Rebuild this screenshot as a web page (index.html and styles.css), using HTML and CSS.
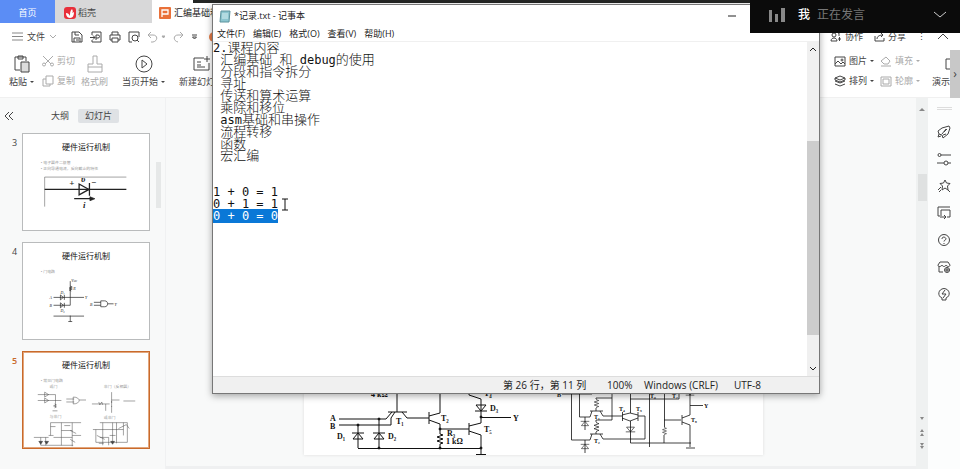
FILE: index.html
```html
<!DOCTYPE html>
<html lang="zh-CN">
<head>
    <meta charset="UTF-8">
    <meta name="viewport" content="width=device-width, initial-scale=1.0">
    <title>汇编基础</title>
    <link rel="stylesheet" href="styles.css">
</head>
<body>
    <svg width="0" height="0" class="defs">
        <symbol id="res" viewBox="0 0 6 12" overflow="visible"><path d="M3 0v1l3 1-6 2 6 2-6 2 6 2-3 1v1"/></symbol>
        <symbol id="diode-up" viewBox="0 0 14 8" overflow="visible"><path d="M1 1h12M2 7l5-6 5 6z"/></symbol>
        <symbol id="diode-down" viewBox="0 0 14 8" overflow="visible"><path d="M1 7h12M2 1l5 6 5-6z"/></symbol>
    </svg>

    <div class="app">
        <nav class="tabs">
            <button class="tab home">首页</button>
            <button class="tab docer">
                <svg width="12" height="12" viewBox="0 0 12 12" stroke-width="0"><rect width="12" height="12" rx="3" fill="#e8303a"/><path d="M6 11C3 11 2 8 2 6c2 0 3 1 4 3 0-3 0-5 2-7 1 2 1 3 0 4l2-1c0 3-1 6-4 6z" fill="#fff"/></svg>
                稻壳
            </button>
            <button class="tab active">
                <svg width="12" height="12" viewBox="0 0 12 12"><rect width="12" height="12" rx="1" fill="#e9713a" stroke="none"/><path d="M3 10V3h6v4H3" fill="none" stroke="#fff" stroke-width="1.3"/></svg>
                汇编基础和debug
            </button>
        </nav>

        <div class="quickbar">
            <button class="file-menu">
                <svg width="11" height="9" viewBox="0 0 11 9" class="soft"><path d="M0 1h11M0 4.500h11M0 8h11"/></svg>
                文件
                <svg class="muted" width="8" height="5" viewBox="0 0 8 5"><path d="M1 1l3 3 3-3"/></svg>
            </button>
            <button aria-label="保存"><svg width="12" height="12" viewBox="0 0 12 12"><path d="M1 11V1h7l3 3v7zM3 11V7h6v4M4 1v3h4M5 9h3"/></svg></button>
            <button aria-label="输出"><svg width="12" height="12" viewBox="0 0 12 12"><path d="M2 4V1h9v10H2V9M0 6.500h5M3 4.500l2 2-2 2M6 9V4h2a1 1 0 010 3H6"/></svg></button>
            <button aria-label="打印"><svg width="12" height="12" viewBox="0 0 12 12"><path d="M3 4V1h6v3M3 9H1V4h10v5H9M3 7h6v4H3z"/></svg></button>
            <button aria-label="预览"><svg width="12" height="12" viewBox="0 0 12 12"><path d="M4 11H1V1h10v5M11 11L9 9"/><circle cx="7" cy="7" r="3"/></svg></button>
            <button aria-label="撤销" class="muted"><svg width="18" height="12" viewBox="0 0 18 12"><path d="M4 1L1 4l3 3M1 4h5c5 0 5 6 0 7H4"/><path d="M15 5h3l-1.500 2z" class="solid"/></svg></button>
            <button aria-label="重做" class="muted"><svg width="12" height="12" viewBox="0 0 12 12"><path d="M8 1l3 3-3 3M11 4H6C1 4 1 10 6 11"/></svg></button>
            <button aria-label="更多"><svg width="7" height="6" viewBox="0 0 7 6"><path d="M1 1h5M1.500 3l2 2 2-2z"/></svg></button>
            <span class="badge"></span>
            <div class="quick-right">
                <button><svg width="12" height="10" viewBox="0 0 12 10"><circle cx="4" cy="3" r="2"/><path d="M1 9c0-4 6-4 6 0zM8 1h1v3M8 7h3M9.500 5v4"/></svg>协作</button>
                <button><svg width="11" height="10" viewBox="0 0 11 10"><path d="M1 4v5h9V6M3 7c0-3 3-4 6-4M7 1l2 2-2 2"/></svg>分享</button>
                <button aria-label="菜单">⋮</button>
                <button aria-label="收起"><svg width="12" height="7" viewBox="0 0 12 7"><path d="M1 6l5-5 5 5"/></svg></button>
            </div>
        </div>

        <div class="ribbon">
            <button class="big paste">
                <svg width="18" height="18" viewBox="0 0 18 18"><path d="M7 15H2V2h11v4M5 1h5v3H5z"/><path d="M8 7h8v10H8z" fill="#ddd"/></svg>
                <span>粘贴<i class="caret"></i></span>
            </button>
            <div class="stack muted">
                <button><svg width="12" height="12" viewBox="0 0 12 12"><path d="M1 1l8 8M11 1L3 9"/><circle cx="2" cy="9.500" r="1.500"/><circle cx="10" cy="9.500" r="1.500"/></svg>剪切</button>
                <button><svg width="12" height="12" viewBox="0 0 12 12"><path d="M4 1h7v8H4zM4 4H1v7h7V9"/></svg>复制</button>
            </div>
            <button class="big muted">
                <svg width="18" height="18" viewBox="0 0 18 18"><path d="M7 9V1h4v8h5v8H2V9zM2 12h14"/></svg>
                <span>格式刷</span>
            </button>
            <button class="big">
                <svg width="18" height="18" viewBox="0 0 18 18"><circle cx="9" cy="9" r="8"/><path d="M7 5l5 4-5 4z"/></svg>
                <span>当页开始<i class="caret"></i></span>
            </button>
            <button class="big">
                <svg width="18" height="18" viewBox="0 0 18 18"><path d="M11 3H1v12h15V8M4 7h4M4 10h4M4 12h8M14 1v6M11 4h6"/></svg>
                <span>新建幻灯片</span>
            </button>
            <div class="ribbon-right">
                <div class="stack">
                    <button><svg width="12" height="11" viewBox="0 0 12 11"><path d="M1 1h10v9H1zM1 8l3-3 3 3 2-2 2 2"/><circle cx="8" cy="4" r="1"/></svg>图片<i class="caret"></i></button>
                    <button><svg width="12" height="12" viewBox="0 0 12 12"><path d="M1 3l5-2 5 2-5 2zM1 6l5 2 5-2M1 9l5 2 5-2M1 3v2l5 2 5-2V3"/></svg>排列<i class="caret"></i></button>
                </div>
                <div class="stack muted">
                    <button><svg width="12" height="11" viewBox="0 0 12 11"><path d="M6 1l4 4-2 3H4L1 5zM1 10h10"/></svg>填充<i class="caret"></i></button>
                    <button><svg width="12" height="11" viewBox="0 0 12 11"><path d="M1 1h10v9H1zM3 3h6v5H3z"/></svg>轮廓<i class="caret"></i></button>
                </div>
                <button class="big show">
                    <svg width="18" height="18" viewBox="0 0 18 18"><path d="M18 4h-4v10h4"/></svg>
                    <span>演示</span>
                </button>
                <button class="more" aria-label="更多工具">›</button>
            </div>
        </div>

        <div class="workspace">
            <aside class="outline">
                <div class="outline-tabs">
                    <button class="fold" aria-label="折叠"><svg width="8" height="8" viewBox="0 0 8 8"><path d="M4 0L0 4l4 4M8 0L4 4l4 4"/></svg></button>
                    <button>大纲</button>
                    <button class="selected">幻灯片</button>
                </div>
                <ol class="thumbs">
                    <li>
                        <span>3</span>
                        <div class="thumb">
                            <h3>硬件运行机制</h3>
                            <svg viewBox="22 133 128 96">
                                <g class="tiny"><text x="40" y="163">• 电子器件二极管</text><text x="40" y="169">• 正向导通电流，反向截止的特性</text></g>
                                <path d="M44 206V176h83" opacity=".6"/>
                                <path d="M44 188.500h83" stroke-width="1.200"/>
                                <path d="M79 183v11l10-5.500zM89.500 182v13M74 198h19" stroke-width="1.300"/>
                                <path d="M90 196l5 2-5 2z" class="solid"/>
                                <g class="sym"><text x="81" y="181">υ</text><text x="83" y="207">i</text><text x="69" y="185">+</text><text x="91" y="184">−</text></g>
                            </svg>
                        </div>
                    </li>
                    <li>
                        <span>4</span>
                        <div class="thumb">
                            <h3>硬件运行机制</h3>
                            <svg viewBox="22 241 128 96">
                                <g class="tiny"><text x="40" y="271">• 门电路</text></g>
                                <path d="M53 295.500h31M53 303.500h17V279M53 314.500h31M70 314v6M68 320h4"/>
                                <path d="M60 293v5l3-2.500zM64 293v5M60 301v5l3-2.500zM64 301v5M70 284l2 1-3 1 3 1-3 1 2 1"/>
                                <path d="M94 300.500h7M94 303.500h7M101 299v6h4c4 0 4-6 0-6zM108 302h6"/>
                                <g class="label"><text x="49" y="297">A</text><text x="49" y="305">B</text><text x="60" y="292">D₁</text><text x="60" y="310">D₂</text><text x="71" y="280">Vcc</text><text x="73" y="288">R</text><text x="85" y="297">Y</text><text x="90" y="304">B</text><text x="115" y="304">Y</text></g>
                            </svg>
                        </div>
                    </li>
                    <li class="current">
                        <span>5</span>
                        <div class="thumb">
                            <h3>硬件运行机制</h3>
                            <svg viewBox="22 350 128 96" class="faint">
                                <g class="tiny"><text x="40" y="380">• 常见门电路</text><text x="49" y="386">或门</text><text x="104" y="386">非门（反相器）</text><text x="49" y="416">与非门</text><text x="104" y="417">或非门</text></g>
                                <path d="M37 392.500h18v13M37 398.500h24M52 409h5M44 390v5l4-2.500zM44 396v5l4-2.500zM66 397h8M66 400h8M73 395v7c8 0 8-7 0-7M79 398h7"/>
                                <path d="M54 402l2 1-3 1 3 1-2 1M92 402h18M99 400l1 3 2-3 1 3M106 402v7M112 399v6M112 401v-11M112 404v7M112 398h8M124 399h12"/>
                                <path d="M33 436h15M48 434h5M50 434V421h31M53 436h8V421M61 436h11M40 436v8h33M45 436v8M72 421v24M61 429h11M72 434h9M61 436v8M50 425h5M64 424h6M70 429l6 3M70 438l5 3"/>
                                <path d="M93 428h31M96 428v13h32V421H100M100 436h9v8M103 421v23M113 421v21M117 421v21M124 421v13M97 434l8 4M110 434h6M99 442h5M119 427l8-4 3 4"/>
                                <path d="M38 440h4l-2 3zM44 440h4l-2 3zM111 440h4l-2 3z" class="solid"/>
                            </svg>
                        </div>
                    </li>
                </ol>
                <div class="outline-scroll"></div>
            </aside>

            <main class="canvas">
                <article class="slide">
                    <svg viewBox="304 389 459 66" class="circuit">
                        <!-- NAND gate -->
                        <path d="M397 389v23M388 412h19M392 412l-6 7h-47M395 412l-4 6v7h-52M402 412l5 6h22"/>
                        <path d="M429 412v12M429 416l11-3v-24M429 420l11 4v9M440 429h29M440 445v4M440 393h28"/>
                        <path d="M469 423v12M469 426l12-3v-24l-12-4v-6M469 431l12 4v19M476 454.500h10M481 417.500h30M358 448.500h123M358 425v23M379 419v30"/>
                        <use href="#res" x="437" y="433" width="6" height="12"/>
                        <use href="#diode-up" x="351" y="432" width="14" height="8"/>
                        <use href="#diode-up" x="372" y="432" width="14" height="8"/>
                        <use href="#diode-down" x="474" y="404" width="14" height="8"/>
                        <g class="solid"><circle cx="358" cy="425" r="1"/><circle cx="379" cy="419" r="1"/><circle cx="379" cy="448" r="1"/><circle cx="440" cy="429" r="1"/><circle cx="440" cy="448" r="1"/><circle cx="481" cy="417" r="1"/><circle cx="481" cy="448" r="1"/></g>
                        <g class="part"><text x="330" y="421">A</text><text x="330" y="429">B</text><text x="337" y="439">D₁</text><text x="388" y="439">D₂</text><text x="396" y="424">T₁</text><text x="441" y="421">T₂</text><text x="484" y="432">T₅</text><text x="484" y="396">T₄</text><text x="490" y="411">D₃</text><text x="447" y="436">R₃</text><text x="446" y="444">1 kΩ</text><text x="371" y="397">4 kΩ</text><text x="513" y="421">Y</text></g>
                        <!-- NOR gate -->
                        <g class="thin">
                            <path d="M562 394h30M579.500 394v23H590l2-6M571.500 394v46H590l2-6M590 411h13M600 411l3 5h19M590 434h13M600 434l3 5h42v-23h-7"/>
                            <path d="M596 399v-1h16M612 389v31h-16v2M596 408v3M596 432v2M585 417v13M585 440v13M622.500 412v9M638 412v9M622 415l8-2 8 2M622 418l8 3 8-3"/>
                            <path d="M630.500 389v24M630.500 421v22H691M630 399h49v-7M649.500 389v58M664.500 389v38M664 435v8M664 420h17M682 415v10M682 418l8-3v-26M682 422l8 3v22M686 448h9M690 405.500h13"/>
                            <use href="#res" x="594" y="399" width="5" height="9"/>
                            <use href="#res" x="594" y="422" width="5" height="10"/>
                            <use href="#res" x="662" y="427" width="5" height="8"/>
                            <use href="#diode-up" x="580" y="420" width="10" height="7"/>
                            <use href="#diode-up" x="580" y="443" width="10" height="7"/>
                            <use href="#diode-down" x="625" y="426" width="11" height="7"/>
                            <use href="#diode-down" x="685" y="390" width="10" height="6"/>
                        </g>
                        <g class="part small"><text x="557" y="397">B</text><text x="594" y="419">T₁</text><text x="594" y="443">T₂</text><text x="619" y="411">T₄</text><text x="636" y="411">T₅</text><text x="650" y="398">T₆</text><text x="672" y="398">T₇</text><text x="691" y="422">T₈</text><text x="704" y="408">Y</text></g>
                    </svg>
                </article>
            </main>

            <div class="canvas-scroll">
                <svg width="6" height="3" viewBox="0 0 6 3"><path d="M0 3l3-3 3 3z"/></svg>
                <div class="canvas-thumb"></div>
                <svg width="6" height="32" viewBox="0 0 6 32"><path d="M1 0h4L3 3zM1 15l2-3 2 3zM1 19l2-3 2 3zM1 26h4l-2 3zM1 29h4l-2 3z"/></svg>
            </div>

            <aside class="tools">
                <span class="grip"></span>
                <button aria-label="动画"><svg width="14" height="14" viewBox="0 0 14 14"><path d="M1 6l4-3 7-2 1 2-2 6-5 4-1-3-3-1zM5 9l4-5M2 9l-1 3 3-1M7 7l3-3M6 10l3-1"/></svg></button>
                <button aria-label="属性"><svg width="14" height="14" viewBox="0 0 14 14"><path d="M4 3h10M0 11h7M11 11h3"/><circle cx="2.500" cy="3" r="1.500"/><circle cx="9" cy="11" r="2"/></svg></button>
                <button aria-label="效果"><svg width="14" height="14" viewBox="0 0 14 14"><path d="M8 1l1.500 3 3.500.5-2.500 2.500.5 4-3-2-3 2 .5-4L3 4.500 6.500 4zM4 8l-3 3M4 11l-2 2M11 11l2 2"/></svg></button>
                <button aria-label="切换"><svg width="14" height="14" viewBox="0 0 14 14"><path d="M3 10H1V1h12M4 10V4h9v7h-3M3 11h6M7 9l2 2-2 2"/></svg></button>
                <button aria-label="帮助"><svg width="14" height="14" viewBox="0 0 14 14"><circle cx="7" cy="7" r="5.500"/><path d="M5 6c0-3 4-2 4 0 0 1-2 1-2 2.500M7 10v1"/></svg></button>
                <button aria-label="商城"><svg width="14" height="14" viewBox="0 0 14 14"><path d="M2 6v6h4M1 5l2-3h8l2 3c0 2-3 2-4 0-1 2-3 2-4 0-1 2-4 2-4 0"/><circle cx="10" cy="10" r="2.500"/><path d="M8 10h5M10 7v5"/></svg></button>
                <button aria-label="灵感"><svg width="14" height="14" viewBox="0 0 14 14"><path d="M5 11C0 9 1 2 7 1.500c6 .5 7 7.500 2 9.500v2H5zM8 3L5 7h4l-3 4"/></svg></button>
            </aside>
        </div>
    </div>

    <div class="screen-edge"></div>

    <section class="notepad">
        <header class="notepad-title">
            <svg width="12" height="13" viewBox="0 0 12 13"><path d="M2 1h9l-1 11H1z" fill="#8cc5cf" stroke="#5d929c"/><path d="M3 4h6M3 6h6M3 8h6" stroke="#d8f0f2"/></svg>
            <h1>*记录.txt - 记事本</h1>
            <button aria-label="最小化"><svg width="8" height="2" viewBox="0 0 8 2"><path d="M0 1h8"/></svg></button>
        </header>
        <nav class="notepad-menu">
            <button>文件(F)</button>
            <button>编辑(E)</button>
            <button>格式(O)</button>
            <button>查看(V)</button>
            <button>帮助(H)</button>
        </nav>
        <div class="notepad-body">
            <div class="editor" contenteditable="true" role="textbox" aria-multiline="true" aria-label="记录" spellcheck="false">
                <p>2.<b>课程内容</b></p>
                <p> <b>汇编基础</b> <b>和</b> debug<b>的使用</b></p>
                <p> <b>分段和指令拆分</b></p>
                <p> <b>寻址</b></p>
                <p> <b>传送和算术运算</b></p>
                <p> <b>乘除和移位</b></p>
                <p> asm<b>基础和串操作</b></p>
                <p> <b>流程转移</b></p>
                <p> <b>函数</b></p>
                <p> <b>宏汇编</b></p>
                <p></p>
                <p></p>
                <p>1 + 0 = 1</p>
                <p>0 + 1 = 1<svg class="ibeam" width="8" height="13" viewBox="0 0 8 13"><path d="M1 1h6M4 1v11M1 12h6"/></svg></p>
                <p><mark>0 + 0 = 0</mark></p>
            </div>
            <div class="notepad-scroll">
                <svg width="8" height="5" viewBox="0 0 8 5"><path d="M1 4l3-3 3 3"/></svg>
                <div class="notepad-thumb"></div>
                <svg width="8" height="5" viewBox="0 0 8 5"><path d="M1 1l3 3 3-3"/></svg>
            </div>
        </div>
        <footer class="notepad-status">
            <span class="pos">第 26 行，第 11 列</span>
            <span class="zoom">100%</span>
            <span class="eol">Windows (CRLF)</span>
            <span class="enc">UTF-8</span>
        </footer>
    </section>

    <div class="speaking">
        <svg width="18" height="14" viewBox="0 0 18 14"><path d="M1 2h3v12H1zM7 6h3v8H7zM13 0h4v14h-4z"/></svg>
        <strong>我</strong>
        <span>正在发言</span>
        <button aria-label="展开"><svg width="14" height="8" viewBox="0 0 14 8"><path d="M1 1l6 5 6-5"/></svg></button>
    </div>
</body>
</html>
```
FILE: styles.css
```css
:root {
    --text: #444;
    --muted: #aaa;
    --canvas: #f8f9f9;
    --accent: #c96a2b;
    --ui-font: "Open Sans", "Noto Sans CJK SC", sans-serif;
}

* {
    margin: 0;
    padding: 0;
    box-sizing: border-box;
}

body {
    font-family: var(--ui-font);
    font-size: 9px;
    line-height: 12px;
    color: var(--text);
    background: var(--canvas);
    overflow: hidden;
}

button {
    display: flex;
    align-items: center;
    flex-shrink: 0;
    border: none;
    background: none;
    font: inherit;
    color: inherit;
    white-space: nowrap;
}

svg {
    display: block;
    flex-shrink: 0;
    fill: none;
    stroke: currentColor;
}

.defs {
    position: absolute;
}

.solid {
    fill: currentColor;
}

.soft {
    color: #888;
}

.muted {
    color: var(--muted);
}

.caret {
    border: 2px solid transparent;
    border-top-color: currentColor;
    border-bottom: none;
    margin-left: 3px;
}

.app {
    height: 100vh;
    display: flex;
    flex-direction: column;
}

/* document tabs */
.tabs {
    display: flex;
    height: 23px;
    background: #fff;
}

.tab {
    padding: 2px 9px 0;
    gap: 2px;
}

.tab.home {
    width: 55px;
    justify-content: center;
    background: #5b8df5;
    color: #fff;
}

.tab.docer {
    width: 97px;
    background: #d8d8d9;
}

.tab.active {
    padding-left: 7px;
    gap: 3px;
    color: #222;
}

/* quick access row */
.quickbar {
    display: flex;
    align-items: center;
    gap: 7px;
    height: 27px;
    padding: 0 11px 0 12px;
    background: #fff;
}

.file-menu {
    gap: 4px;
    margin-right: 7px;
}

.badge {
    width: 10px;
    height: 10px;
    margin-left: 4px;
    border-radius: 50%;
    background: #e47a45;
}

.quick-right {
    display: flex;
    align-items: center;
    gap: 11px;
    margin-left: auto;
}

.quick-right button {
    gap: 3px;
}

/* ribbon */
.ribbon {
    display: flex;
    align-items: center;
    height: 48px;
    padding: 0 0 5px 9px;
    background: #fff;
    border-bottom: 1px solid #f0f0f0;
}

.big {
    flex-direction: column;
    gap: 3px;
    margin-right: 14px;
}

.big span {
    display: flex;
    align-items: center;
}

.big.paste {
    margin-right: 8px;
}

.stack {
    display: flex;
    flex-direction: column;
    gap: 8px;
    margin-right: 6px;
}

.stack button {
    gap: 3px;
}

.stack .caret {
    margin-left: 0;
}

.ribbon-right {
    display: flex;
    align-items: center;
    align-self: stretch;
    margin-left: auto;
}

.big.show {
    margin: 0 0 0 6px;
}

.more {
    width: 10px;
    height: 48px;
    align-self: flex-start;
    justify-content: center;
    background: #c8c8c8;
    font-size: 12px;
}

/* slide outline */
.workspace {
    flex: 1;
    display: flex;
    min-height: 0;
}

.outline {
    position: relative;
    width: 166px;
    padding: 0 15px 0 9px;
    border-right: 1px solid #f0f1f2;
}

.outline-tabs {
    display: flex;
    align-items: center;
    height: 35px;
}

.outline-tabs .fold {
    margin: 0 38px 0 -4px;
}

.outline-tabs .selected {
    margin-left: 9px;
    padding: 1px 7px;
    background: #dfe2e5;
    border-radius: 2px;
}

.thumbs {
    list-style: none;
    display: flex;
    flex-direction: column;
    gap: 11px;
}

.thumbs li {
    display: flex;
}

.thumbs li > span {
    width: 13px;
    padding: 4px 0 0 3px;
}

.thumb {
    position: relative;
    flex: 1;
    height: 98px;
    background: #fff;
    border: 1px solid #b9bbbc;
}

.thumb h3 {
    padding-top: 6px;
    text-align: center;
    font-size: 8px;
    font-weight: 400;
    line-height: 14px;
    color: #111;
}

.thumb svg {
    position: absolute;
    inset: 0;
    width: 100%;
    height: 100%;
    color: #222;
    stroke-width: 0.7;
}

.thumb .faint {
    stroke-width: 0.5;
    color: #444;
}

.thumb text {
    fill: currentColor;
    stroke: none;
}

.tiny {
    font-size: 4px;
    color: #999;
}

.sym {
    font: italic bold 9px "Liberation Serif", serif;
}

.label {
    font: italic 4px "Liberation Serif", serif;
}

.current > span {
    color: var(--accent);
    font-weight: 600;
}

.current .thumb {
    border-color: var(--accent);
    outline: 1px solid #e2a67d;
    outline-offset: -2px;
}

.outline-scroll {
    position: absolute;
    top: 64px;
    right: 4px;
    width: 5px;
    height: 46px;
    background: #e6e8e8;
}

/* slide canvas */
.canvas {
    flex: 1;
    display: flex;
    align-items: flex-end;
    padding: 12px 153px 11px 138px;
    border-bottom: 3px solid #eff0f1;
}

.slide {
    flex: 1;
    height: 100%;
    display: flex;
    align-items: flex-end;
    background: #fff;
    box-shadow: 0 0 3px #ddd;
}

.circuit {
    width: 100%;
    color: #111;
}

.circuit .thin {
    stroke-width: 0.8;
}

.part {
    font: bold 8px "Liberation Serif", serif;
    fill: #111;
    stroke: none;
}

.part.small {
    font-size: 6px;
}

.canvas-scroll {
    display: flex;
    flex-direction: column;
    align-items: center;
    width: 12px;
    padding: 10px 0 20px;
    background: #eff1f1;
}

.canvas-scroll svg {
    fill: #888;
    stroke: none;
}

.canvas-thumb {
    width: 9px;
    height: 27px;
    margin: 63px 0 auto;
    background: #dfe1e1;
}

.tools {
    display: flex;
    flex-direction: column;
    align-items: center;
    gap: 13px;
    width: 32px;
    padding-top: 9px;
    background: #fcfdfd;
}

.grip {
    width: 15px;
    height: 3px;
    margin-bottom: 2px;
    border: 1px solid #ddd;
    border-width: 1px 0;
}

/* notepad window */
.screen-edge {
    position: absolute;
    inset: 0 0 auto 193px;
    height: 3px;
    background: #242624;
}

.notepad {
    position: absolute;
    inset: 4px 140px 75px 212px;
    display: flex;
    flex-direction: column;
    background: #fff;
    border: 1px solid #777;
    box-shadow: 0 2px 7px rgba(0, 0, 0, 0.35);
    color: #222;
}

.notepad-title {
    display: flex;
    align-items: center;
    gap: 3px;
    height: 22px;
    padding: 0 83px 0 6px;
}

.notepad-title h1 {
    flex: 1;
    font-size: 9px;
    font-weight: 400;
}

.notepad-menu {
    display: flex;
    gap: 8px;
    height: 15px;
    padding-left: 4px;
    border-bottom: 1px solid #f0f0f0;
}

.notepad-body {
    flex: 1;
    display: flex;
    min-height: 0;
}

.editor {
    flex: 1;
    outline: none;
    font: 12px/12px "DejaVu Sans Mono", "Noto Sans CJK SC", monospace;
    overflow: hidden;
    color: #111;
}

.editor p {
    height: 12px;
    white-space: pre;
}

/* full-width characters are set larger than the latin ones */
.editor b {
    font-size: 13px;
    font-weight: 300;
    line-height: 10px;
}

.editor mark {
    background: #0a78d7;
    color: #fff;
}

.ibeam {
    display: inline-block;
    margin-left: 3px;
    vertical-align: top;
}

.notepad-scroll {
    display: flex;
    flex-direction: column;
    align-items: center;
    width: 12px;
    padding: 5px 0;
    background: #f0f0f0;
}

.notepad-thumb {
    align-self: stretch;
    flex: 0 1 194px;
    margin: 89px 0 auto;
    background: #cdcdcd;
}

.notepad-status {
    display: flex;
    align-items: center;
    justify-content: flex-end;
    height: 17px;
    background: #f0f0f0;
    border-top: 1px solid #ddd;
    font-size: 10px;
}

.pos {
    width: 104px;
}

.zoom {
    width: 37px;
}

.eol {
    width: 90px;
}

.enc {
    width: 85px;
}

/* meeting overlay */
.speaking {
    position: absolute;
    top: 0;
    right: 0;
    display: flex;
    align-items: center;
    width: 210px;
    height: 33px;
    padding: 0 13px 3px 18px;
    background: #0b0b0b;
    color: #777;
    font-size: 12px;
}

.speaking > svg {
    margin-right: 12px;
    fill: #888;
    stroke: none;
}

.speaking strong {
    margin-right: 7px;
    font-weight: 500;
    color: #fff;
}

.speaking button {
    margin-left: auto;
    color: #ccc;
}
```
